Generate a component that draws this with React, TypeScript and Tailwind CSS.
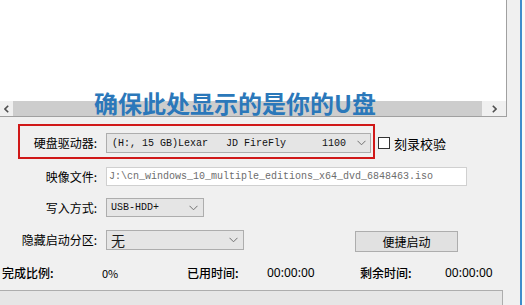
import React from "react";

const cjk = "font-['Noto_Sans_CJK_SC','Noto_Sans',sans-serif]";
const mono = "font-['Liberation_Mono',monospace]";

function Chevron() {
  return (
    <svg width="9" height="6" viewBox="0 0 9 6" className="shrink-0">
      <polyline points="0.5,0.8 4.5,4.8 8.5,0.8" fill="none" stroke="#707070" strokeWidth="1" />
    </svg>
  );
}

function ScrollArrow({ dir }: { dir: "left" | "right" }) {
  return (
    <svg width="5" height="8" viewBox="0 0 5 8">
      <polyline
        points={dir === "left" ? "4.2,0.8 1,4 4.2,7.2" : "0.8,0.8 4,4 0.8,7.2"}
        fill="none"
        stroke="#505050"
        strokeWidth="1.6"
      />
    </svg>
  );
}

function Label({ children }: { children: React.ReactNode }) {
  return <span className="w-[97px] shrink-0 text-right text-[12px] leading-none text-black">{children}</span>;
}

export default function App() {
  return (
    <div className={`flex h-[305px] w-[525px] overflow-hidden bg-[#f0f0f0] ${cjk}`}>
      <div className="relative flex w-[520px] flex-col">
        {/* file list */}
        <div className="flex h-[117px] w-[507px] flex-col border-r border-b border-[#a0a0a0] bg-white">
          <div className="flex-1" />
          <div className="flex h-[15px] items-stretch bg-[#f0f0f0]">
            <div className="flex w-[13px] items-center justify-center">
              <ScrollArrow dir="left" />
            </div>
            <div className="w-[469px] bg-[#cdcdcd]" />
            <div className="flex flex-1 items-center justify-center">
              <ScrollArrow dir="right" />
            </div>
          </div>
        </div>

        {/* drive */}
        <div className="mt-[16px] flex h-[20px] items-center">
          <Label>硬盘驱动器:</Label>
          <div className="ml-[9px] flex h-[20px] w-[265px] items-center justify-between border border-[#adadad] bg-[#e5e5e5] pr-[4px] pl-[5px]">
            <span className={`${mono} whitespace-pre text-[10px] text-[#111111]`}>(H:, 15 GB)Lexar   JD FireFly      1100</span>
            <Chevron />
          </div>
          <div className="ml-[7px] h-[12px] w-[12px] border border-[#333333] bg-white" />
          <span className="ml-[4px] text-[13px] leading-none text-black">刻录校验</span>
        </div>

        {/* image file */}
        <div className="mt-[14px] flex h-[19px] items-center">
          <Label>映像文件:</Label>
          <div className="ml-[9px] flex h-[19px] w-[361px] items-center border border-[#d0d0d0] bg-white pl-[2px]">
            <span className={`${mono} whitespace-pre text-[10px] text-[#6d6d6d]`}>J:\cn_windows_10_multiple_editions_x64_dvd_6848463.iso</span>
          </div>
        </div>

        {/* write mode */}
        <div className="mt-[12px] flex h-[19px] items-center">
          <Label>写入方式:</Label>
          <div className="ml-[9px] flex h-[19px] w-[98px] items-center justify-between border border-[#adadad] bg-[#e5e5e5] pr-[5px] pl-[4px]">
            <span className={`${mono} text-[10px] text-[#111111]`}>USB-HDD+</span>
            <Chevron />
          </div>
        </div>

        {/* hidden partition + quick boot */}
        <div className="mt-[13px] flex h-[22px] items-start">
          <div className="flex h-[20px] items-center">
            <Label>隐藏启动分区:</Label>
          </div>
          <div className="ml-[9px] flex h-[20px] w-[138px] items-center justify-between border border-[#adadad] bg-[#e5e5e5] pr-[5px] pl-[4px]">
            <span className="text-[14px] leading-none text-[#1a1a1a]">无</span>
            <Chevron />
          </div>
          <button className="mt-[1px] ml-[111px] flex h-[21px] w-[103px] items-center justify-center border border-[#adadad] bg-[#e1e1e1] text-[12px] leading-none text-black">
            便捷启动
          </button>
        </div>

        {/* progress stats */}
        <div className="mt-[13px] flex h-[16px] items-center pl-[2px] text-[12px] leading-none text-black">
          <span className="w-[100px] font-medium">完成比例:</span>
          <span className="w-[85px] text-[11px]">0%</span>
          <span className="w-[80px] font-medium">已用时间:</span>
          <span className="w-[93px] font-['Noto_Sans',sans-serif]">00:00:00</span>
          <span className="w-[85px] font-medium">剩余时间:</span>
          <span className="font-['Noto_Sans',sans-serif]">00:00:00</span>
        </div>

        {/* progress bar */}
        <div className="mt-[9px] w-[503px] flex-1 border-t border-r border-[#adadad] bg-[#e6e6e6]" />

        {/* annotations */}
        <div className="absolute top-[124px] left-[18px] h-[35px] w-[357px] border-2 border-[#d01818]" />
        <div className="absolute top-[91px] left-[94px] text-[24px] leading-none font-bold text-[#2b78ba]">
          确保此处显示的是你的U盘
        </div>
      </div>
      <div className="w-[2px] bg-[#3d8ccb]" />
      <div className="flex-1 bg-[#f8f8f8]" />
    </div>
  );
}
